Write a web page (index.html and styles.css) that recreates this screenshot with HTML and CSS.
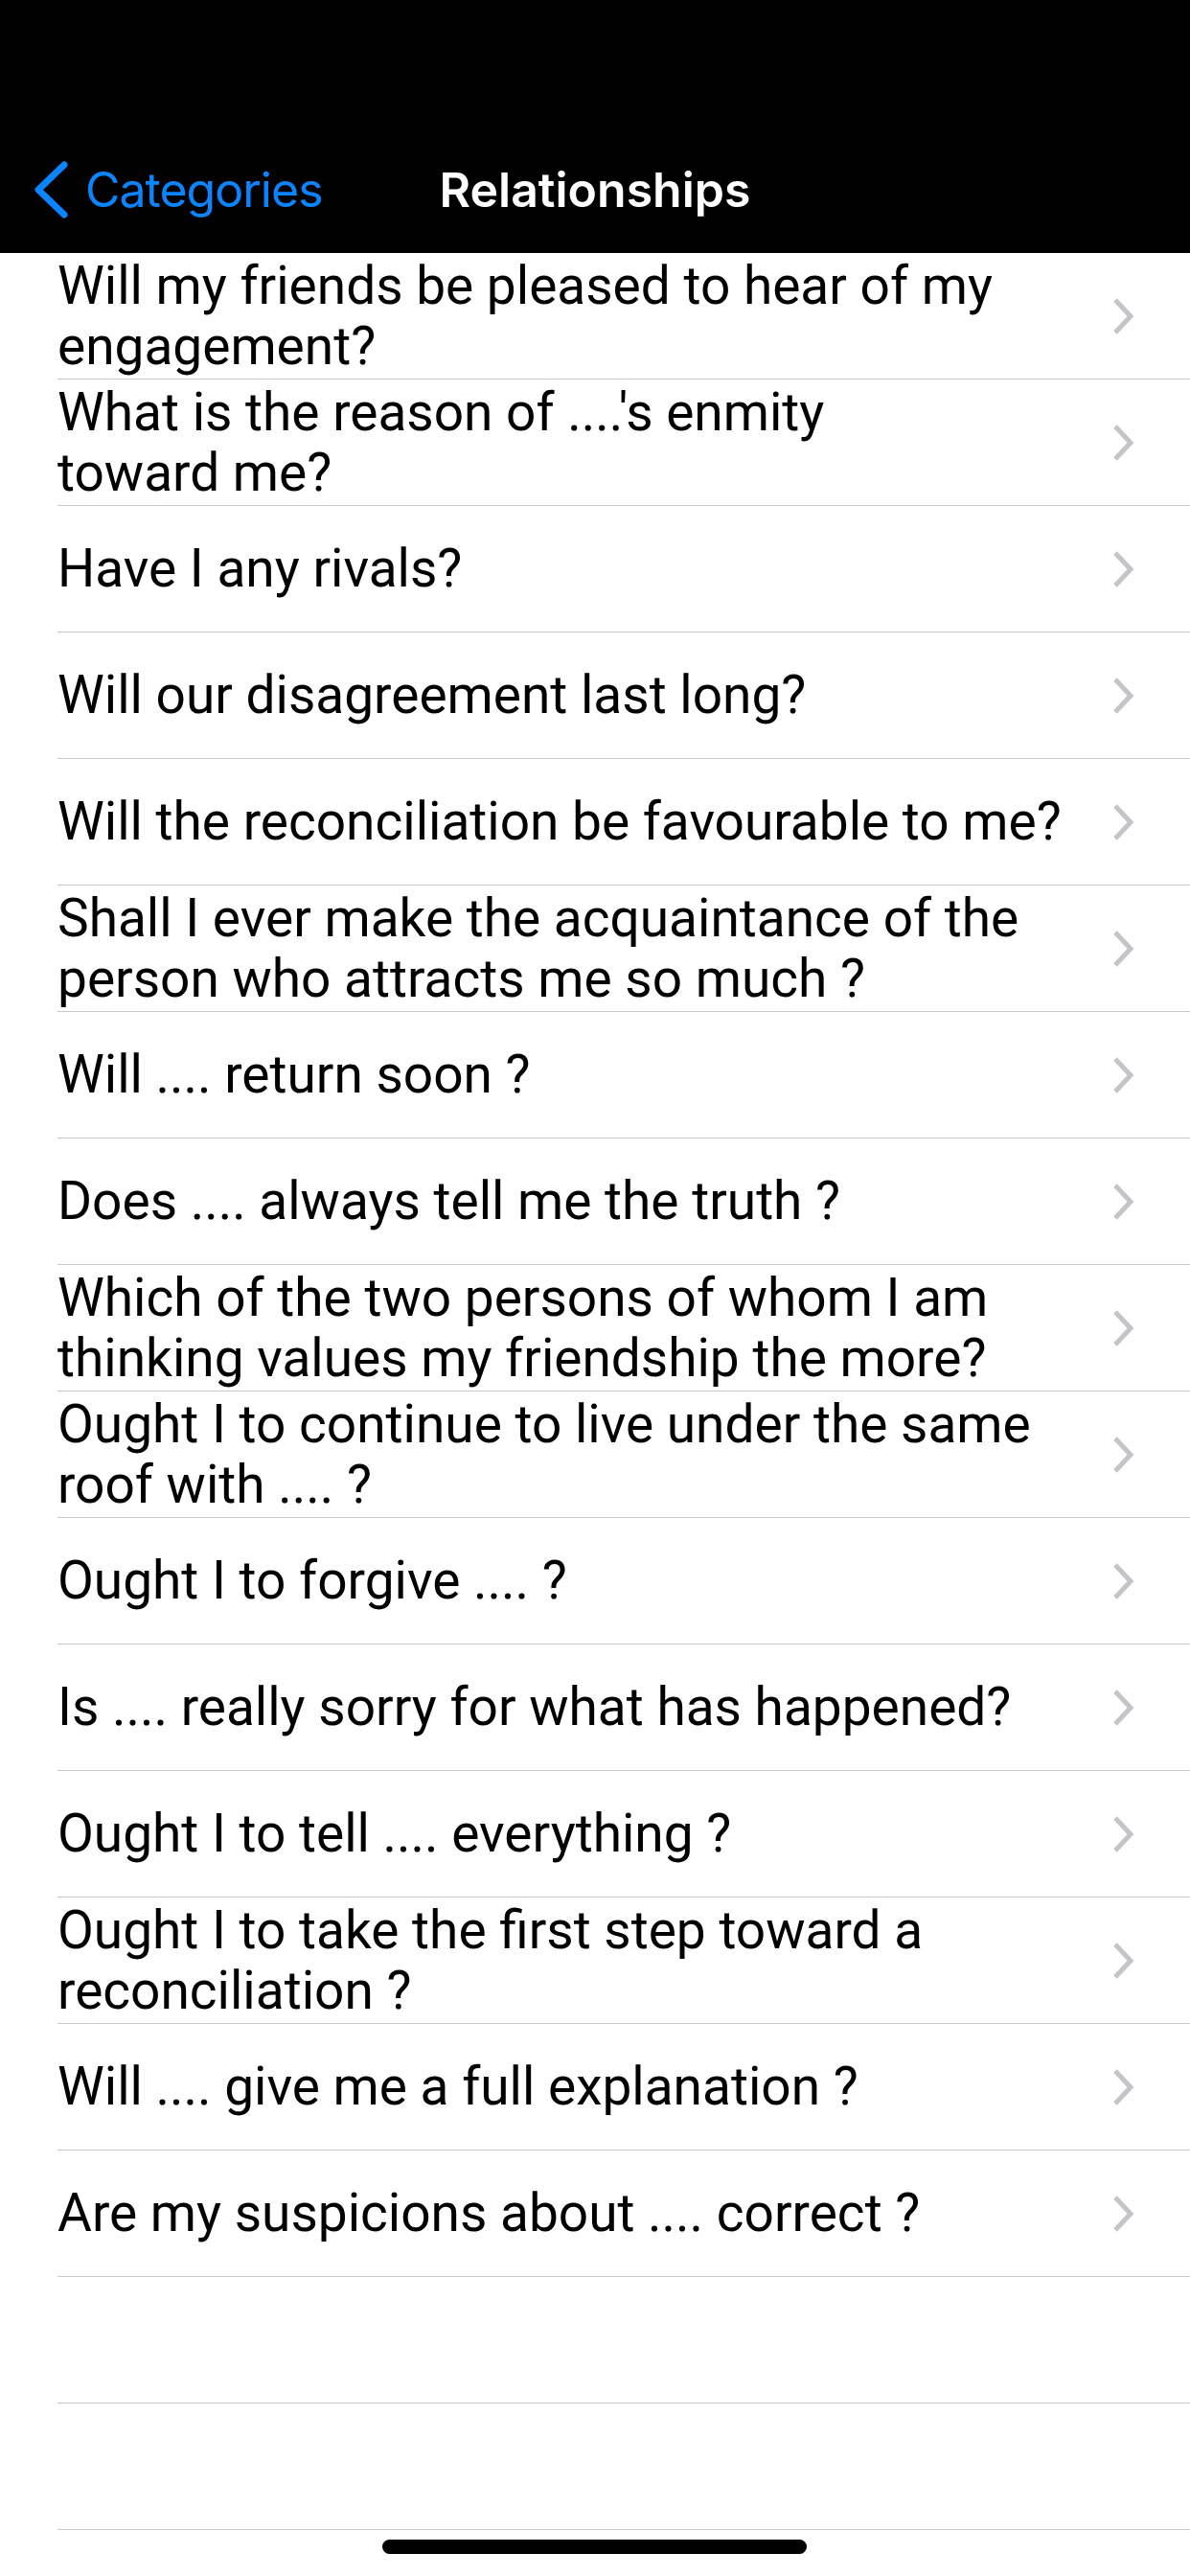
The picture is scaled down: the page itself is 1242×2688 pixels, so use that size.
FILE: index.html
```html
<!DOCTYPE html>
<html lang="en">
<head>
<meta charset="UTF-8" />
<meta name="viewport" content="width=device-width, initial-scale=1" />
<title>Relationships</title>
<link rel="stylesheet" href="styles.css">
</head>
<body>

<div class="status-bar"></div>

<nav class="nav-bar">
  <a class="back" href="#">
    <svg class="back-icon" width="40" height="64" viewBox="0 0 40 64">
      <polyline points="32,6 5,32 32,58" />
    </svg>
    <span>Categories</span>
  </a>
  <div class="nav-title">Relationships</div>
  <div></div>
</nav>

<ul class="list">
  <li class="row"><span class="text">Will my friends be pleased to hear of my<br>engagement?</span><svg class="chevron" viewBox="0 0 24 40"><polyline points="4,3 20,20 4,37" /></svg></li>
  <li class="row"><span class="text">What is the reason of ....'s enmity<br>toward me?</span><svg class="chevron" viewBox="0 0 24 40"><polyline points="4,3 20,20 4,37" /></svg></li>
  <li class="row"><span class="text">Have I any rivals?</span><svg class="chevron" viewBox="0 0 24 40"><polyline points="4,3 20,20 4,37" /></svg></li>
  <li class="row"><span class="text">Will our disagreement last long?</span><svg class="chevron" viewBox="0 0 24 40"><polyline points="4,3 20,20 4,37" /></svg></li>
  <li class="row"><span class="text">Will the reconciliation be favourable to me?</span><svg class="chevron" viewBox="0 0 24 40"><polyline points="4,3 20,20 4,37" /></svg></li>
  <li class="row"><span class="text">Shall I ever make the acquaintance of the<br>person who attracts me so much ?</span><svg class="chevron" viewBox="0 0 24 40"><polyline points="4,3 20,20 4,37" /></svg></li>
  <li class="row"><span class="text">Will .... return soon ?</span><svg class="chevron" viewBox="0 0 24 40"><polyline points="4,3 20,20 4,37" /></svg></li>
  <li class="row"><span class="text">Does .... always tell me the truth ?</span><svg class="chevron" viewBox="0 0 24 40"><polyline points="4,3 20,20 4,37" /></svg></li>
  <li class="row"><span class="text">Which of the two persons of whom I am<br>thinking values my friendship the more?</span><svg class="chevron" viewBox="0 0 24 40"><polyline points="4,3 20,20 4,37" /></svg></li>
  <li class="row"><span class="text">Ought I to continue to live under the same<br>roof with .... ?</span><svg class="chevron" viewBox="0 0 24 40"><polyline points="4,3 20,20 4,37" /></svg></li>
  <li class="row"><span class="text">Ought I to forgive .... ?</span><svg class="chevron" viewBox="0 0 24 40"><polyline points="4,3 20,20 4,37" /></svg></li>
  <li class="row"><span class="text">Is .... really sorry for what has happened?</span><svg class="chevron" viewBox="0 0 24 40"><polyline points="4,3 20,20 4,37" /></svg></li>
  <li class="row"><span class="text">Ought I to tell .... everything ?</span><svg class="chevron" viewBox="0 0 24 40"><polyline points="4,3 20,20 4,37" /></svg></li>
  <li class="row"><span class="text">Ought I to take the first step toward a<br>reconciliation ?</span><svg class="chevron" viewBox="0 0 24 40"><polyline points="4,3 20,20 4,37" /></svg></li>
  <li class="row"><span class="text">Will .... give me a full explanation ?</span><svg class="chevron" viewBox="0 0 24 40"><polyline points="4,3 20,20 4,37" /></svg></li>
  <li class="row"><span class="text">Are my suspicions about .... correct ?</span><svg class="chevron" viewBox="0 0 24 40"><polyline points="4,3 20,20 4,37" /></svg></li>
  <li class="row empty"></li>
  <li class="row empty"></li>
  <li class="row empty"></li>
</ul>

<div class="home-indicator"></div>

</body>
</html>
```

FILE: styles.css
```css
body {
  margin: 0;
  width: 1242px;
  height: 2688px;
  overflow: hidden;
  position: relative;
  background: #fff;
  color: #000;
  font-family: Inter, "Noto Sans", sans-serif;
}
.status-bar {
  height: 132px;
  background: #000;
}
.nav-bar {
  height: 132px;
  background: #000;
  display: grid;
  grid-template-columns: 1fr auto 1fr;
  align-items: center;
}
.back {
  display: flex;
  align-items: center;
  gap: 14px;
  padding-left: 35px;
  color: #0a84ff;
  font-size: 50px;
  letter-spacing: -1px;
  text-decoration: none;
}
.back-icon polyline {
  fill: none;
  stroke: #0a84ff;
  stroke-width: 7;
  stroke-linecap: round;
  stroke-linejoin: round;
}
.nav-title {
  color: #fff;
  font-size: 50px;
  font-weight: 600;
}
.list {
  list-style: none;
  margin: 0;
  padding: 0;
}
.row {
  height: 132px;
  box-sizing: border-box;
  margin-left: 60px;
  padding-right: 58px;
  border-bottom: 1px solid #c8c7cc;
  display: flex;
  align-items: center;
  justify-content: space-between;
}
.text {
  font-family: Roboto, "Noto Sans", sans-serif;
  font-size: 55px;
  line-height: 63px;
}
.chevron {
  width: 24px;
  height: 40px;
  flex-shrink: 0;
}
.chevron polyline {
  fill: none;
  stroke: #c4c4c8;
  stroke-width: 5;
}
.home-indicator {
  position: absolute;
  left: 399px;
  top: 2650px;
  width: 443px;
  height: 15px;
  border-radius: 8px;
  background: #000;
}
```
